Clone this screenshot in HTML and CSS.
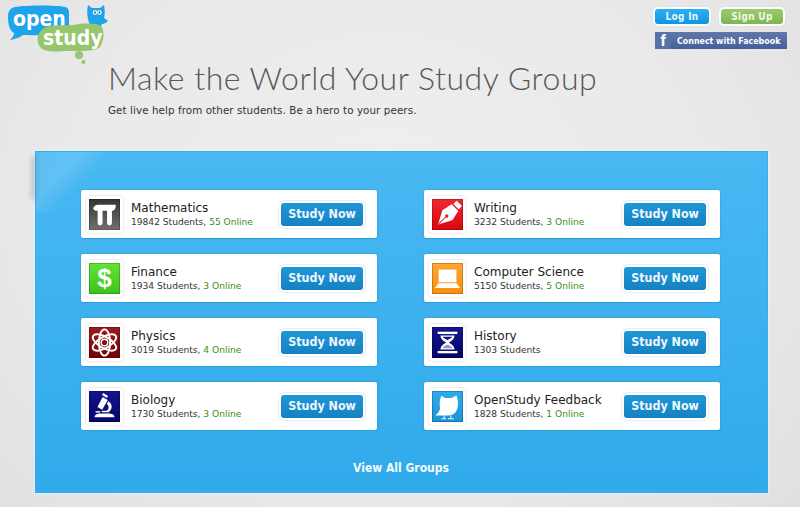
FILE: index.html
```html
<!DOCTYPE html>
<html lang="en">
<head>
<meta charset="utf-8">
<title>OpenStudy</title>
<link rel="stylesheet" href="styles.css">
</head>
<body>
<header class="top">
  <svg class="logo" width="102" height="62" viewBox="0 0 102 62" aria-label="OpenStudy">
    <path fill="#1ea4ea" d="M7 2C20 0 48 0 57 2C62 3 61 8 61 16C61 24 61 29 55 29C44 31 26 30 15 30C11 33 7 34 2 35C5 32 6 30 6 28C1 25 0 18 0 12C0 6 2 3 7 2Z"/>
    <text class="logo-word" x="5" y="21" font-size="21">open</text>
    <path fill="#1ea4ea" d="M80 0L84 3H92L96 0C97 5 97 9 96 13L100 16C98 18 96 19 94 19L92 23H84C80 18 78 8 80 0Z"/>
    <circle cx="87" cy="7.500" r="2.300" fill="#fff"/><circle cx="91.500" cy="7.500" r="2.300" fill="#fff"/>
    <circle cx="87" cy="7.500" r="1" fill="#14507a"/><circle cx="91.500" cy="7.500" r="1" fill="#14507a"/>
    <path fill="#95c56c" d="M36 23C42 19 56 21 66 20C76 18 88 18 93 21C97 25 96 36 92 42C86 47 70 46 56 46C46 47 36 47 32 42C28 36 29 27 36 23Z"/>
    <text class="logo-word" x="35" y="40" font-size="21">study</text>
    <circle cx="71" cy="50" r="4" fill="#95c56c"/><circle cx="75.500" cy="57" r="2" fill="#95c56c"/>
  </svg>
  <div class="auth">
    <div class="auth-row">
      <a class="pill pill-blue">Log In</a>
      <a class="pill pill-green">Sign Up</a>
    </div>
    <a class="fb"><span class="fb-mark">f</span><span class="fb-text">Connect with Facebook</span></a>
  </div>
</header>

<section class="hero">
  <h1>Make the World Your Study Group</h1>
  <p>Get live help from other students. Be a hero to your peers.</p>
</section>

<main class="panel">
  <div class="groups">
    <article class="card">
      <div class="frame"><div class="icon icon-math">
        <svg viewBox="0 0 33 33"><path d="M4.500 10C5 7.500 7 6 10 6H28.500C28.500 10 27 12.500 24 12.500H9C7 12.500 5.500 12 4.500 10Z" fill="#fff"/><path d="M11.800 10V25.500M21.800 10V25.500" fill="none" stroke="#fff" stroke-width="5.200" stroke-linecap="round"/></svg>
      </div></div>
      <div class="info"><h2>Mathematics</h2><p>19842 Students, <span class="on">55 Online</span></p></div>
      <a class="study"><span>Study Now</span></a>
    </article>
    <article class="card">
      <div class="frame"><div class="icon icon-write">
        <svg viewBox="0 0 33 33"><g transform="rotate(45 16 17)" fill="#fff"><rect x="12.500" y="-1" width="8" height="5" rx=".5"/><path d="M11.500 5.500H21.500L24 17L16.500 31L9 17Z"/><circle cx="16.500" cy="18" r="1.800" fill="#e0202a"/><rect x="16" y="18" width="1" height="12" fill="#e0202a"/></g></svg>
      </div></div>
      <div class="info"><h2>Writing</h2><p>3232 Students, <span class="on">3 Online</span></p></div>
      <a class="study"><span>Study Now</span></a>
    </article>
    <article class="card">
      <div class="frame"><div class="icon icon-fin"><span class="dollar">$</span></div></div>
      <div class="info"><h2>Finance</h2><p>1934 Students, <span class="on">3 Online</span></p></div>
      <a class="study"><span>Study Now</span></a>
    </article>
    <article class="card">
      <div class="frame"><div class="icon icon-cs">
        <svg viewBox="0 0 33 33"><path d="M7 7H26V20.500H7Z" fill="#fff"/><path d="M7 21.500H26L30 26.500H3Z" fill="#fff"/></svg>
      </div></div>
      <div class="info"><h2>Computer Science</h2><p>5150 Students, <span class="on">5 Online</span></p></div>
      <a class="study"><span>Study Now</span></a>
    </article>
    <article class="card">
      <div class="frame"><div class="icon icon-phys">
        <svg viewBox="0 0 33 33"><g fill="none" stroke="#fff" stroke-width="2"><ellipse cx="16.500" cy="16.500" rx="14" ry="6" transform="rotate(30 16.500 16.500)"/><ellipse cx="16.500" cy="16.500" rx="14" ry="6" transform="rotate(-30 16.500 16.500)"/><ellipse cx="16.500" cy="16.500" rx="14" ry="6" transform="rotate(90 16.500 16.500)"/><circle cx="16.500" cy="16.500" r="3.500" stroke-width="1.500"/></g></svg>
      </div></div>
      <div class="info"><h2>Physics</h2><p>3019 Students, <span class="on">4 Online</span></p></div>
      <a class="study"><span>Study Now</span></a>
    </article>
    <article class="card">
      <div class="frame"><div class="icon icon-hist">
        <svg viewBox="0 0 33 33" fill="#fff"><rect x="6" y="5" width="21" height="2.500"/><rect x="6" y="25.500" width="21" height="2.500"/><path d="M9 9H24C24 13 20 15 18 16.500C20 18 24 20 24 24H9C9 20 13 18 15 16.500C13 15 9 13 9 9Z"/><path d="M11.500 10.500H21.500C21 12 18 13 16.500 14C15 13 12 12 11.500 10.500Z" fill="#15158c"/><path d="M16 19C14 20 12 21 11.500 22.500H21.500C21 21 19 20 17 19Z" fill="#15158c" opacity=".45"/></svg>
      </div></div>
      <div class="info"><h2>History</h2><p>1303 Students</p></div>
      <a class="study"><span>Study Now</span></a>
    </article>
    <article class="card">
      <div class="frame"><div class="icon icon-bio">
        <svg viewBox="0 0 33 33" fill="#fff"><rect x="14" y="3.500" width="6" height="2.500" transform="rotate(30 17 5)"/><path d="M14.500 6.500L20 9.500L14 20L9 17Z"/><path d="M20.500 11C25 13.500 25.500 19.500 21 22.500H14.500C13 22.500 13 21 14.500 21H19C21.500 19 21.500 15.500 19 14Z"/><rect x="7" y="21.500" width="5" height="1.500"/><path d="M6 28C6 25 9 24 12 24H21C24 24 27 25 27 28Z"/></svg>
      </div></div>
      <div class="info"><h2>Biology</h2><p>1730 Students, <span class="on">3 Online</span></p></div>
      <a class="study"><span>Study Now</span></a>
    </article>
    <article class="card">
      <div class="frame"><div class="icon icon-feed">
        <svg viewBox="0 0 33 33"><path d="M10 5L14 7.500H21L26 4.500C28 10 28.500 16 26 21C24 25 19 26.500 14 26C10 26 7 26 3.500 26C6 24.500 8 22 8.500 19C8 14 8 9 10 5Z" fill="#fff"/><path d="M13 26V29M20 26V29M10 29.500H15M17 29.500H23" stroke="#fff" stroke-width="1" fill="none"/></svg>
      </div></div>
      <div class="info"><h2>OpenStudy Feedback</h2><p>1828 Students, <span class="on">1 Online</span></p></div>
      <a class="study"><span>Study Now</span></a>
    </article>
  </div>
  <a class="view-all">View All Groups</a>
</main>
</body>
</html>
```

FILE: styles.css
```css
* { box-sizing: border-box; }
html, body { margin: 0; height: 100%; }
body {
  overflow: hidden;
  font-family: "DejaVu Sans", sans-serif;
  background: radial-gradient(ellipse 70% 90% at 48% 40%, #efefef 0%, #e9e9e9 60%, #e0e0e0 100%);
  color: #222;
}
a { display: block; text-decoration: none; }

.top {
  display: flex;
  justify-content: space-between;
  align-items: flex-start;
  padding: 5px 13px 0 8px;
  height: 60px;
}
.logo { display: block; }
.logo-word {
  font-family: "DejaVu Sans Condensed", "DejaVu Sans", sans-serif;
  font-weight: 700;
  fill: #fff;
}

.auth { display: flex; flex-direction: column; gap: 6px; width: 132px; padding-top: 2px; }
.auth-row { display: flex; gap: 8px; margin-left: -2px; }
.pill {
  height: 19px;
  line-height: 15px;
  border: 2px solid #fff;
  border-radius: 5px;
  font-family: "DejaVu Sans Condensed", "DejaVu Sans", sans-serif;
  font-size: 10px;
  font-weight: 700;
  text-align: center;
  color: #e9f6ff;
  letter-spacing: .3px;
  box-shadow: 0 0 1px #bbb;
}
.pill-blue { width: 58px; background: linear-gradient(#2db0f2, #1096e0); }
.pill-green { width: 66px; background: linear-gradient(#9ccb6f, #7fb552); color: #f1f8e8; }
.fb {
  display: flex;
  align-items: center;
  height: 17px;
  background: linear-gradient(#5f78ab, #465f98);
  color: #fff;
  font-family: "DejaVu Sans Condensed", "DejaVu Sans", sans-serif;
  font-size: 8.800px;
  font-weight: 700;
}
.fb-mark {
  width: 16px;
  height: 17px;
  font: 700 17px/17px "Liberation Sans", sans-serif;
  text-align: center;
  color: #fff;
  background: #5871a6;
}
.fb-text { margin-left: 6px; white-space: nowrap; }

.hero { padding-left: 108px; height: 86px; }
.hero h1 {
  margin: 0;
  font: 300 32px/36px Lato, sans-serif;
  letter-spacing: .53px;
  color: #585858;
}
.hero p {
  margin: 7px 0 0;
  font-size: 10.300px;
  line-height: 14px;
  color: #333;
  letter-spacing: .1px;
}

.panel {
  position: relative;
  width: 733px;
  height: 342px;
  margin-top: 5px;
  margin-left: 35px;
  padding: 38px 46px 0 45px;
  border: 1px solid #2fb0f2;
  border-bottom-width: 2px;
  background: linear-gradient(#49b8f2, #30aaeb);
  box-shadow: 0 0 3px rgba(255,255,255,.6);
}
.panel::before {
  content: "";
  position: absolute;
  left: 0; top: 0;
  width: 70px; height: 60px;
  background: linear-gradient(135deg, rgba(255,255,255,.1) 0, rgba(255,255,255,.14) 35%, rgba(255,255,255,0) 60%);
}
.panel::after {
  content: "";
  position: absolute;
  left: -1px; top: 6px;
  width: 1px; height: 40px;
  box-shadow: -2px 0 5px 1px rgba(60,60,60,.35);
}

.groups {
  position: relative;
  z-index: 1;
  display: grid;
  grid-template-columns: 296px 296px;
  column-gap: 47px;
  row-gap: 16px;
}
.card {
  display: flex;
  align-items: center;
  height: 48px;
  padding: 0 12px 0 4px;
  background: #fff;
  border-radius: 2px;
  box-shadow: 0 1px 0 #2a9fe0, 0 0 2px rgba(20,90,140,.45);
}
.frame {
  flex: none;
  width: 39px;
  height: 39px;
  padding: 3px;
  border: 1px solid #eee;
  border-radius: 4px;
  background: #fff;
}
.icon {
  width: 100%;
  height: 100%;
  display: flex;
  align-items: center;
  justify-content: center;
  box-shadow: inset 0 0 0 1px rgba(0,0,0,.2);
}
.icon svg { display: block; width: 100%; height: 100%; }
.icon-math { background: linear-gradient(#333, #707070); }
.icon-fin { background: linear-gradient(#62e236, #3cc41c); }
.icon-phys { background: linear-gradient(#9c1c1c, #6e0505); }
.icon-bio { background: linear-gradient(#13138f, #05056a); }
.icon-write { background: linear-gradient(#ee2a30, #d9060f); }
.icon-cs { background: linear-gradient(#ffa733, #f98f0e); }
.icon-hist { background: linear-gradient(#15158c, #05056a); }
.icon-feed { background: linear-gradient(#2fabe8, #1b94d8); }
.dollar { font: 700 26px/33px "Liberation Sans", sans-serif; color: #fff; }

.info { flex: 1; min-width: 0; margin-left: 7px; padding-top: 2px; }
.info h2 {
  margin: 0;
  font-size: 12px;
  line-height: 15px;
  font-weight: 400;
  color: #222;
}
.info p {
  margin: 0;
  font-size: 9.100px;
  line-height: 13px;
  color: #333;
  white-space: nowrap;
}
.on { color: #3f8a1c; }

.study {
  flex: none;
  padding: 2px;
  border-radius: 5px;
  background: #fff;
  box-shadow: 0 0 1px 1px #ececec;
}
.study span {
  display: block;
  width: 82px;
  height: 23px;
  line-height: 21px;
  border-radius: 3px;
  background: linear-gradient(#1f97d9, #1581c2);
  color: #eef8ff;
  font-family: "DejaVu Sans Condensed", "DejaVu Sans", sans-serif;
  font-size: 12.400px;
  font-weight: 700;
  text-align: center;
}

.view-all {
  position: relative;
  z-index: 1;
  margin-top: 30px;
  text-align: center;
  color: #f2faff;
  font-family: "DejaVu Sans Condensed", "DejaVu Sans", sans-serif;
  font-size: 12px;
  font-weight: 700;
  line-height: 16px;
}
```
